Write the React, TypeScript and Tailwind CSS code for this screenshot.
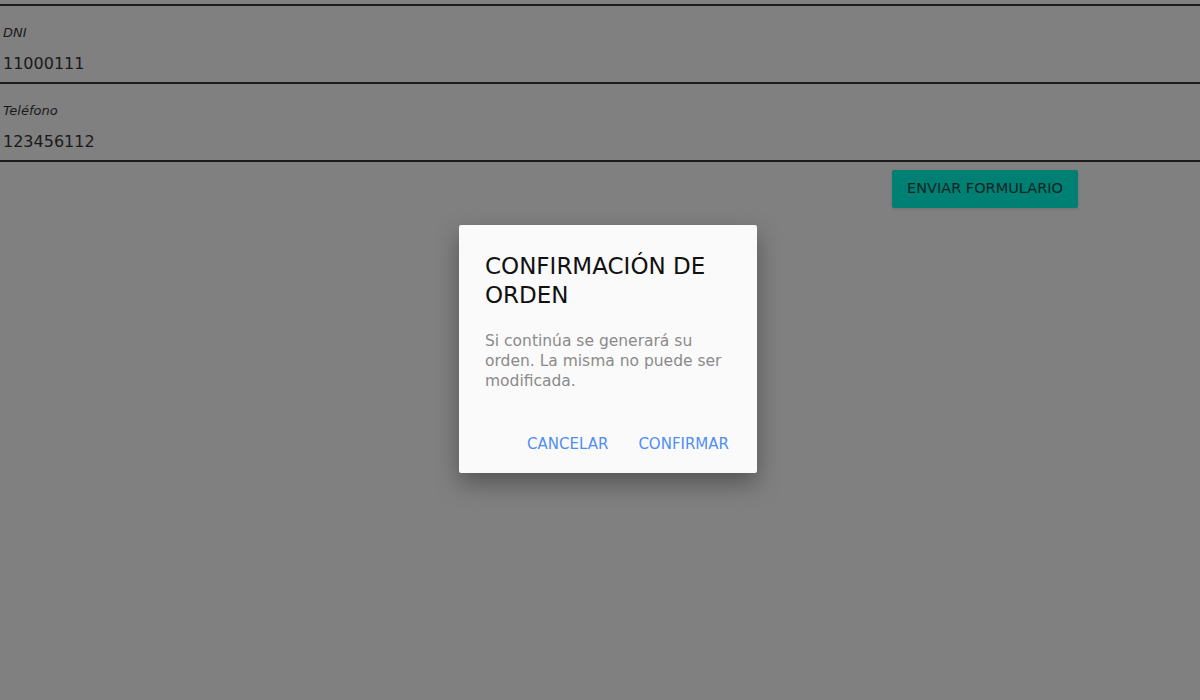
const font = "font-['Century_Gothic','URW_Gothic','DejaVu_Sans',sans-serif]"

function Field({ label, value }: { label: string; value: string }) {
  return (
    <div className="flex h-[78px] flex-col border-b-2 border-[#1c1c1c] px-[3px]">
      <span className="mt-[19px] text-[13px] leading-[16px] italic text-[#1a1a1a]">{label}</span>
      <span className="mt-[13px] text-[16px] leading-[20px] text-[#1a1a1a]">{value}</span>
    </div>
  )
}

export default function App() {
  return (
    <div className={`relative h-[700px] w-[1200px] overflow-hidden bg-[#808080] ${font}`}>
      <div className="mt-[4px] border-t-2 border-[#1c1c1c]">
        <Field label="DNI" value="11000111" />
        <Field label="Teléfono" value="123456112" />
        <div className="flex justify-end pr-[122px] pt-[8px]">
          <button
            type="button"
            className="h-[38px] w-[186px] rounded-[2px] bg-[#007f73] text-[14.5px] text-[#0f2523] shadow-sm"
          >
            ENVIAR FORMULARIO
          </button>
        </div>
      </div>

      <div
        role="dialog"
        aria-modal="true"
        className="absolute left-[459px] top-[225px] flex h-[248px] w-[298px] flex-col rounded-[2px] bg-[#fafafa] px-[26px] pt-[27px] shadow-[0_10px_24px_rgba(0,0,0,0.35)]"
      >
        <h2 className="text-[23px] leading-[29px] text-[#111]">CONFIRMACIÓN DE ORDEN</h2>
        <p className="mt-[21px] text-[15.5px] leading-[20px] text-[#8a8a8a]">
          Si continúa se generará su orden. La misma no puede ser modificada.
        </p>
        <div className="mt-auto mb-[18px] flex justify-end gap-[30px] pr-[2px]">
          <button type="button" className="text-[15px] text-[#4f8ef7]">
            CANCELAR
          </button>
          <button type="button" className="text-[15px] text-[#4f8ef7]">
            CONFIRMAR
          </button>
        </div>
      </div>
    </div>
  )
}
